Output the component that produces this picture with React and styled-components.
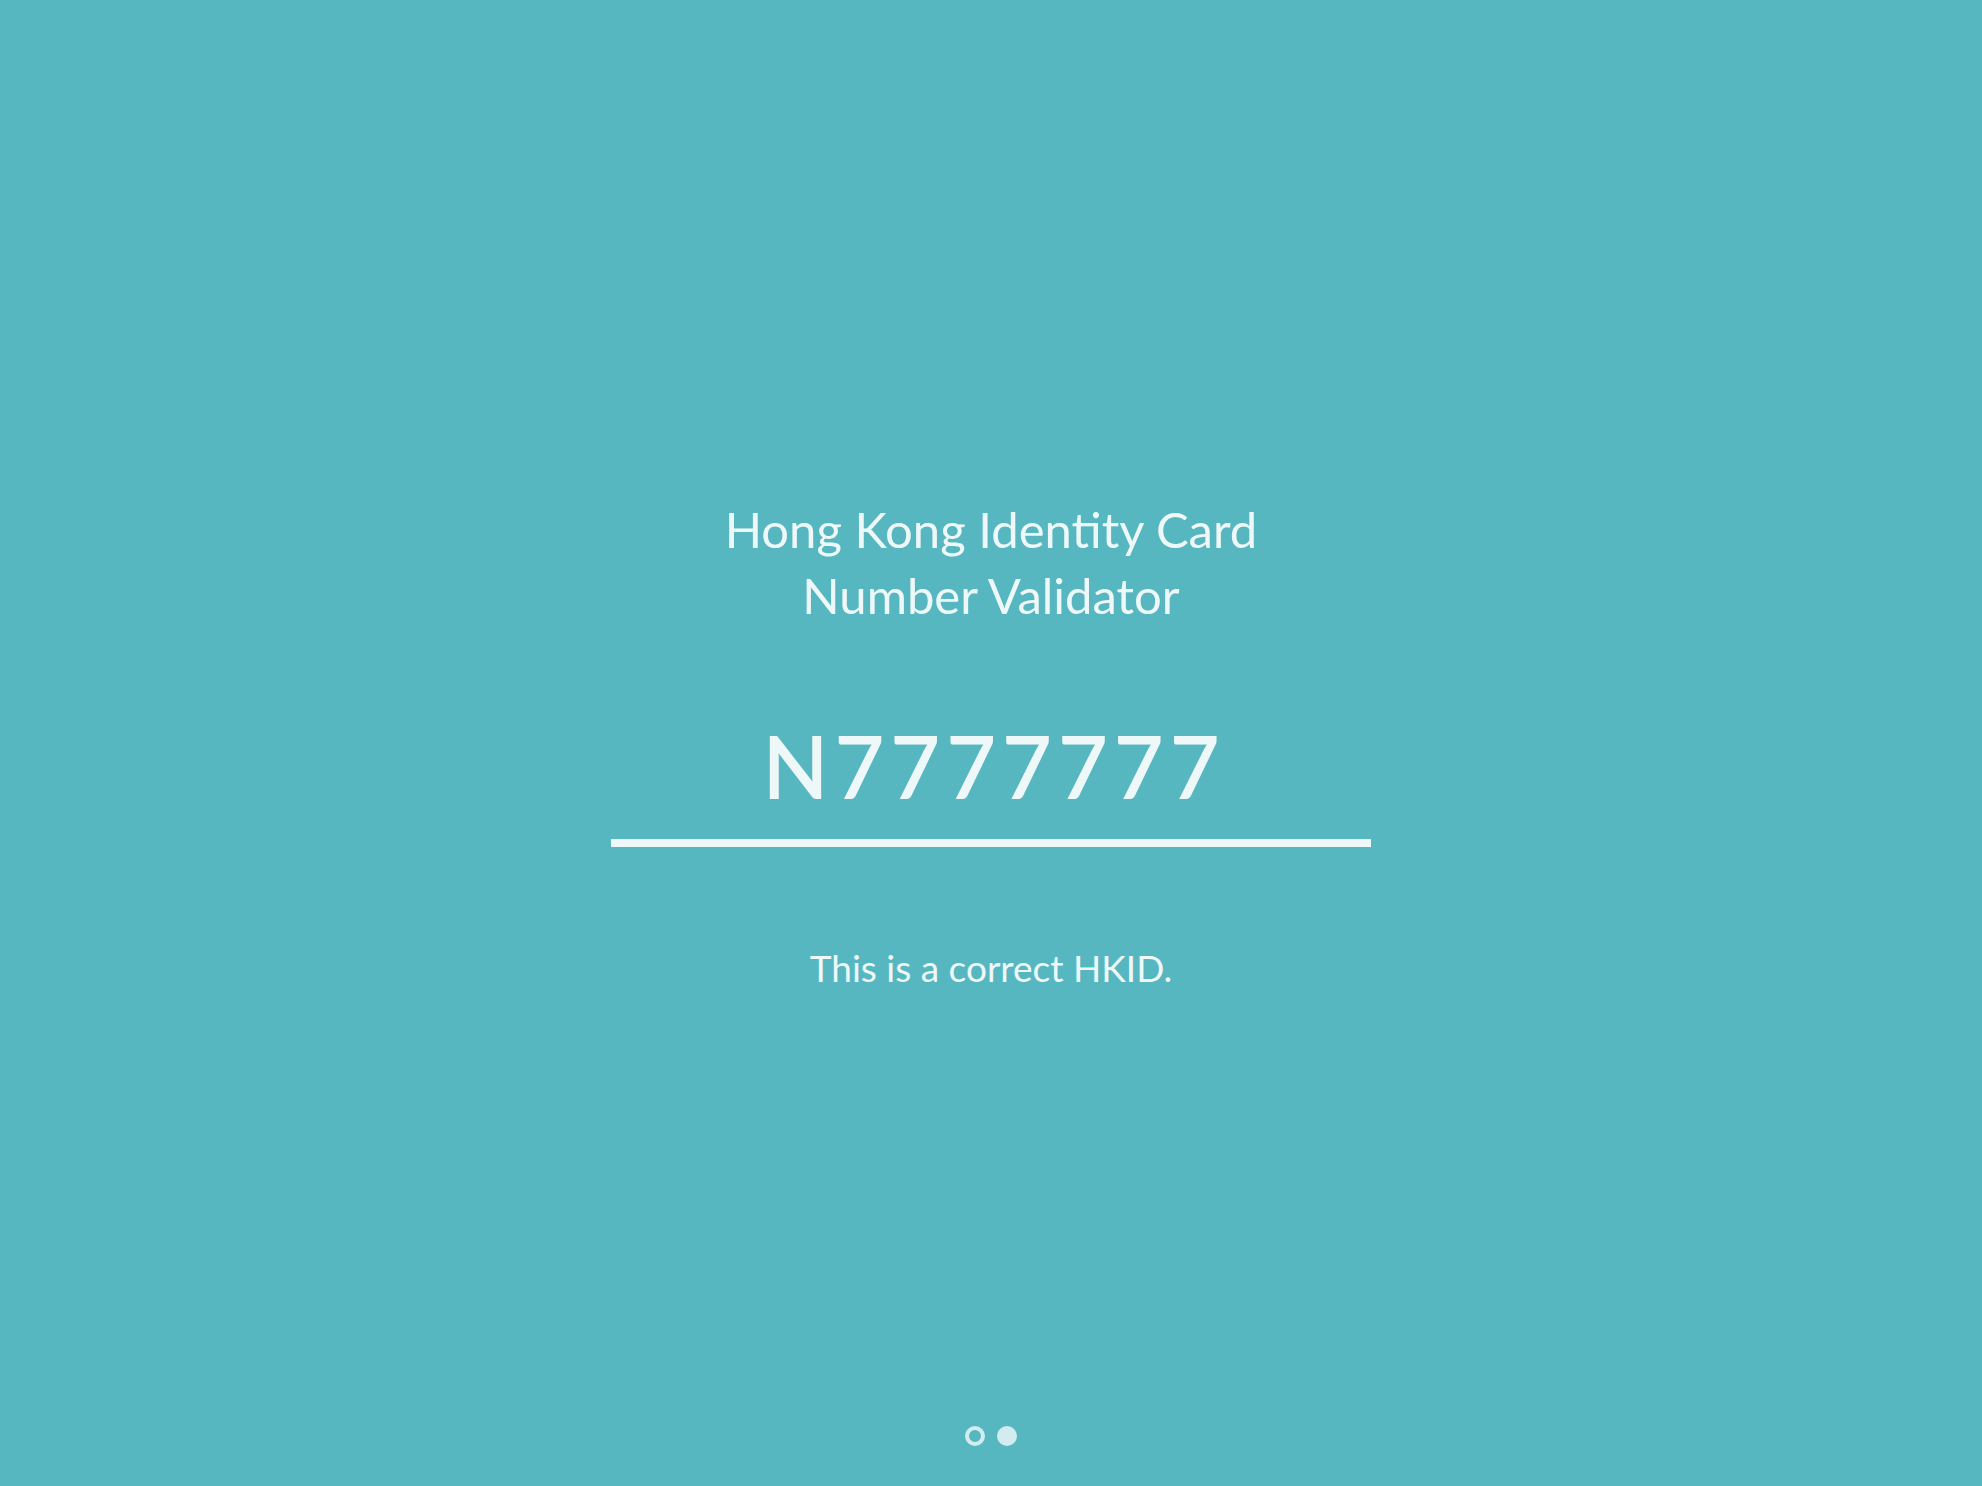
import React from "react";
import styled, { createGlobalStyle } from "styled-components";

const GlobalStyle = createGlobalStyle`
  html, body { margin: 0; padding: 0; }
  body {
    background: #57b7c1;
    font-family: Lato, "Open Sans", "Noto Sans", sans-serif;
    color: #eff8f9;
  }
`;

const Page = styled.div`
  height: 100vh;
  display: grid;
  grid-template-rows: 1fr auto;
  background: #57b7c1;
`;

const Main = styled.main`
  display: flex;
  flex-direction: column;
  align-items: center;
  padding-top: 496px;
`;

const Title = styled.h1`
  margin: 0;
  font-family: Lato, sans-serif;
  font-weight: 400;
  font-size: 49px;
  line-height: 66px;
  text-align: center;
  color: #eff8f9;
`;

const Field = styled.div`
  margin-top: 95px;
  width: 760px;
  border-bottom: 8px solid #eff8f9;
  padding-bottom: 30px;
  text-align: center;
`;

const Digits = styled.div`
  font-family: Lato, sans-serif;
  font-weight: 600;
  font-size: 86px;
  line-height: 86px;
  letter-spacing: 6px;
  padding-left: 6px;
  color: #eff8f9;
`;

const Status = styled.p`
  margin: 97px 0 0;
  font-family: Lato, sans-serif;
  font-size: 37px;
  line-height: 48px;
  color: #eff8f9;
`;

const Pager = styled.nav`
  display: flex;
  justify-content: center;
  gap: 12px;
  padding-bottom: 40px;
`;

const Dot = styled.span`
  width: 20px;
  height: 20px;
  box-sizing: border-box;
  border-radius: 50%;
  background: ${(p) => (p.$active ? "#d2ecef" : "transparent")};
  border: ${(p) => (p.$active ? "none" : "4px solid #d2ecef")};
`;

export default function App() {
  return (
    <>
      <GlobalStyle />
      <Page>
        <Main>
          <Title>
            Hong Kong Identity Card
            <br />
            Number Validator
          </Title>
          <Field>
            <Digits>N7777777</Digits>
          </Field>
          <Status>This is a correct HKID.</Status>
        </Main>
        <Pager>
          <Dot />
          <Dot $active />
        </Pager>
      </Page>
    </>
  );
}
